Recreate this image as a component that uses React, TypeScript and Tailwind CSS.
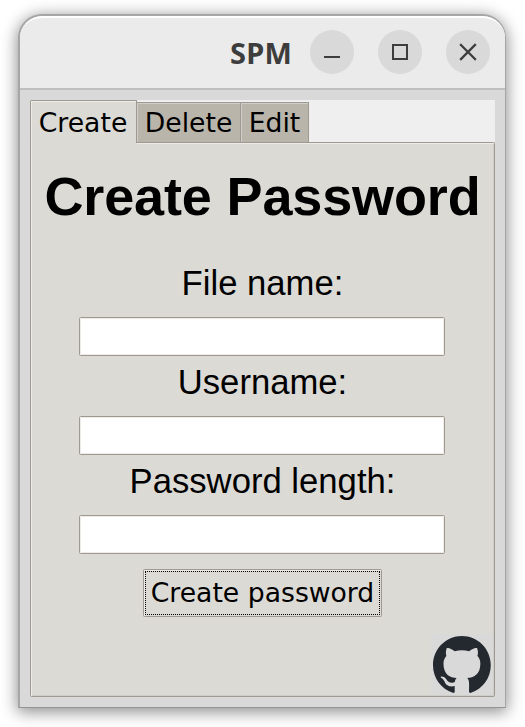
import type { ReactNode } from "react";

const TABS = [
  { label: "Delete", box: "w-[105px]" },
  { label: "Edit", box: "w-[69px] -ml-px" },
];

function WindowButton({ children, label }: { children: ReactNode; label: string }) {
  return (
    <button aria-label={label} className="flex size-11 items-center justify-center rounded-full bg-[#d9d9d9]">
      <svg className="size-11" viewBox="0 0 44 44" fill="none" stroke="#3d3d3d" strokeWidth="2">
        {children}
      </svg>
    </button>
  );
}

function TitleBar() {
  return (
    <header className="flex h-[74px] shrink-0 items-start justify-end gap-6 rounded-t-[22px] border-t-2 border-b-2 border-t-white border-b-[#bfbfbf] bg-[#ebebeb] pr-[15px] pt-3">
      <h1 className="-mr-[7px] h-11 w-[63px] whitespace-nowrap font-['Noto_Sans',sans-serif] text-[29px] font-bold leading-[45px] tracking-[0.3px] text-[#3d3d3d]">
        SPM
      </h1>
      <WindowButton label="Minimize"><path d="M14 27h16" /></WindowButton>
      <WindowButton label="Maximize"><path d="M15 15h14v14H15z" /></WindowButton>
      <WindowButton label="Close"><path d="M15 15l14 14M29 15L15 29" strokeWidth="2.3" strokeLinecap="square" /></WindowButton>
    </header>
  );
}

function Field({ label }: { label: string }) {
  return (
    <label className="flex h-[99px] flex-col items-center">
      <span className="h-[59px] whitespace-nowrap text-[34.67px] leading-[50px]">{label}</span>
      <input className="mr-px h-[39px] w-[366px] rounded-[1.5px] border border-[#9e9a91] bg-white shadow-[inset_0_0_0_1px_#eeebe7] outline-none" />
    </label>
  );
}

function GithubMark() {
  return (
    <svg className="h-[57px] w-[58px]" viewBox="0 0 98 96" fill="#24292f">
      <path d="M48.854 0C21.839 0 0 22 0 49.217c0 21.756 13.993 40.172 33.405 46.69 2.427.49 3.316-1.059 3.316-2.362 0-1.141-.08-5.052-.08-9.127-13.59 2.934-16.42-5.867-16.42-5.867-2.184-5.704-5.42-7.17-5.42-7.17-4.448-3.015.324-3.015.324-3.015 4.934.326 7.523 5.052 7.523 5.052 4.367 7.496 11.404 5.378 14.235 4.074.404-3.178 1.699-5.378 3.074-6.6-10.839-1.141-22.243-5.378-22.243-24.283 0-5.378 1.94-9.778 5.014-13.2-.485-1.222-2.184-6.275.486-13.038 0 0 4.125-1.304 13.426 5.052a46.97 46.97 0 0 1 12.214-1.63c4.125 0 8.33.571 12.213 1.63 9.302-6.356 13.427-5.052 13.427-5.052 2.67 6.763.97 11.816.485 13.038 3.155 3.422 5.015 7.822 5.015 13.2 0 18.905-11.404 23.06-22.324 24.283 1.78 1.548 3.316 4.481 3.316 9.126 0 6.6-.08 11.897-.08 13.526 0 1.304.89 2.853 3.316 2.364 19.412-6.52 33.405-24.935 33.405-46.691C97.707 22 75.788 0 48.854 0z" />
    </svg>
  );
}

export default function App() {
  return (
    <div className="h-[727px] w-[525px] overflow-hidden bg-white pl-[18px] pt-[14px] text-black">
      <main className="flex h-[694px] w-[488px] flex-col rounded-t-[24px] border-2 border-b border-r-[1.5px] border-[#a6a6a6] border-b-[#929594] bg-[#d9d9d9] shadow-[0_3px_16px_1px_rgba(0,0,0,0.45)]">
        <TitleBar />
        <div className="flex flex-1 flex-col px-[10px] pb-[10px] pt-[10px]">
          <nav className="flex h-[42px] w-[465px] items-start bg-[#efefef] font-['DejaVu_Sans',sans-serif] text-[26.67px]">
            <button className="relative z-10 h-[43px] w-[107px] rounded-tl-[1.5px] border border-b-0 border-[#9e9a91] bg-[#dcdad5] pr-px leading-[43px] shadow-[inset_1px_1px_0_#eeebe7] after:absolute after:-bottom-px after:left-px after:-right-px after:h-px after:bg-[#dcdad5] after:content-['']">
              Create
            </button>
            {TABS.map((t) => (
              <button
                key={t.label}
                className={`mt-0.5 -ml-px h-[41px] border border-[#9e9a91] bg-[#bab5ab] leading-[39px] shadow-[inset_1px_1px_0_#cfcdc8] ${t.box}`}
              >
                {t.label}
              </button>
            ))}
          </nav>
          <section className="relative flex h-[555px] w-[465px] flex-col items-center rounded-[1.5px] border border-[#9e9a91] bg-[#dcdad5] font-['Liberation_Sans',sans-serif] shadow-[inset_1px_1px_0_#eeebe7,inset_-1px_-1px_0_#cfcdc8]">
            <h2 className="mt-[22px] h-[93px] whitespace-nowrap text-[54px] font-bold leading-[62px] tracking-[-0.15px]">Create Password</h2>
            <Field label="File name:" />
            <Field label="Username:" />
            <Field label="Password length:" />
            <button className="mt-[14px] h-12 w-[239px] rounded-[1.5px] border border-[#9e9a91] p-px shadow-[inset_1px_1px_0_#eeebe7] font-['DejaVu_Sans',sans-serif] text-[26.67px]">
              <span className="flex h-11 items-center justify-center whitespace-nowrap border border-dotted border-black">Create password</span>
            </button>
            <div className="absolute bottom-px right-px flex h-[61px] w-[62px] items-center justify-center bg-[#d9d9d9]">
              <GithubMark />
            </div>
          </section>
        </div>
      </main>
    </div>
  );
}
